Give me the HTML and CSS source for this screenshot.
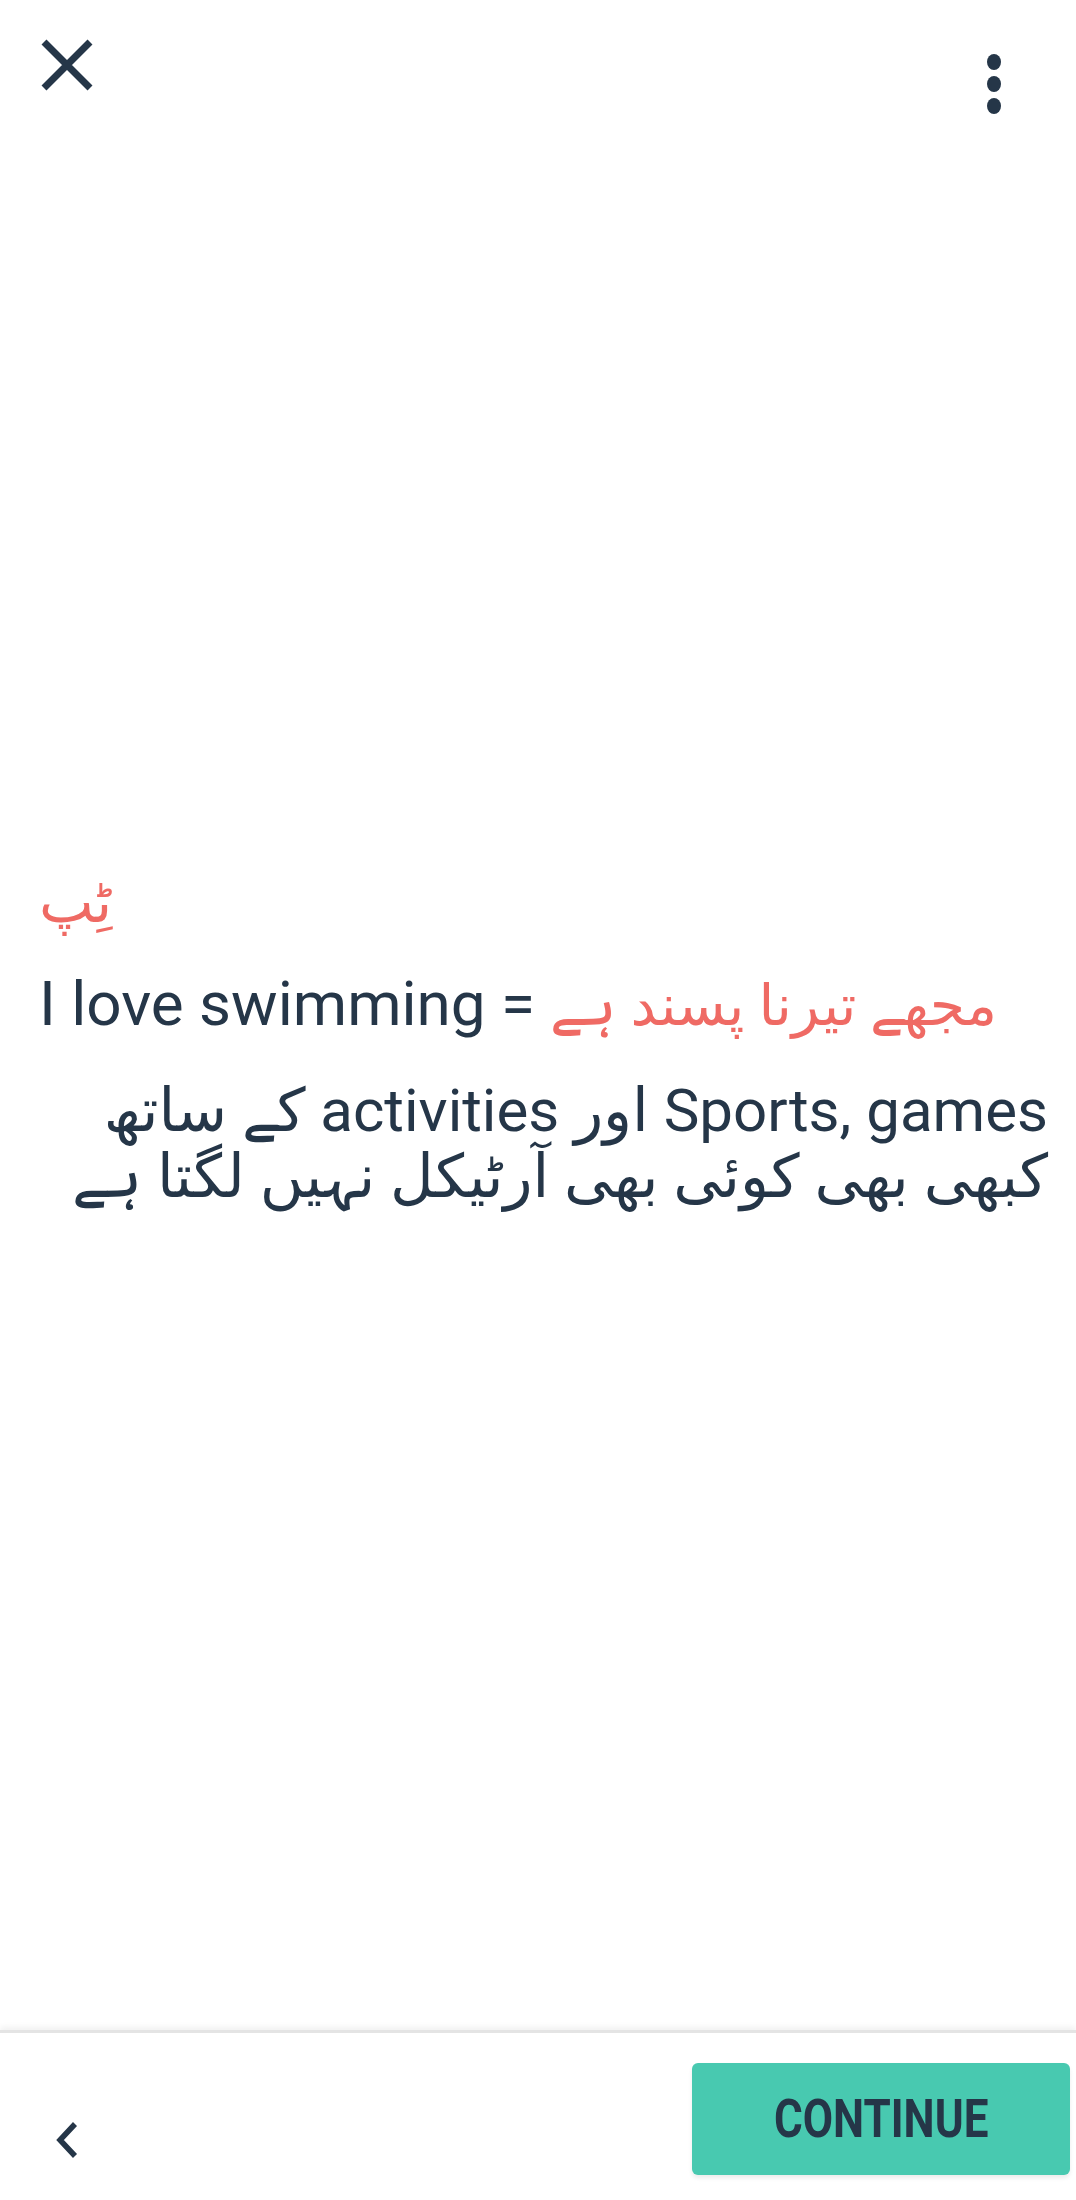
FILE: index.html
```html
<!DOCTYPE html>
<html lang="ur">
<head>
<meta charset="utf-8">
<title>Tip</title>
<link rel="stylesheet" href="styles.css">
</head>
<body>
<div class="screen">
  <header class="topbar">
    <button class="icon-btn close" aria-label="Close">
      <svg width="54" height="54" viewBox="0 0 54 54"><path d="M4 4 L50 50 M50 4 L4 50" stroke="#253648" stroke-width="7" fill="none"/></svg>
    </button>
    <button class="icon-btn more" aria-label="More">
      <svg width="20" height="64" viewBox="0 0 20 64"><ellipse cx="10" cy="9" rx="7" ry="8" fill="#253648"/><ellipse cx="10" cy="31" rx="7" ry="8" fill="#253648"/><ellipse cx="10" cy="53" rx="7" ry="8" fill="#253648"/></svg>
    </button>
  </header>
  <main class="content">
    <h2 class="tip-title" dir="rtl">ٹِپ</h2>
    <p class="example">I love swimming = <span class="accent">مجھے تیرنا پسند ہے</span></p>
    <p class="note" dir="rtl">Sports, games اور activities کے ساتھ<br>کبھی بھی کوئی بھی آرٹیکل نہیں لگتا ہے</p>
  </main>
  <footer class="bottombar">
    <button class="icon-btn back" aria-label="Back">
      <svg width="26" height="38" viewBox="0 0 26 38"><path d="M21 3 L6 19 L21 35" stroke="#253648" stroke-width="5.5" fill="none"/></svg>
    </button>
    <button class="continue"><span class="continue-label">CONTINUE</span></button>
  </footer>
</div>
</body>
</html>
```
FILE: styles.css
```css
* { box-sizing: border-box; }
html, body { margin: 0; padding: 0; background: #ffffff; }
body { font-family: Roboto, "DejaVu Sans", sans-serif; color: #253648; }

.screen {
  width: 1076px;
  min-height: 2200px;
  display: flex;
  flex-direction: column;
}

.icon-btn {
  border: 0;
  background: transparent;
  padding: 0;
  display: flex;
  align-items: center;
  justify-content: center;
}

.topbar {
  height: 140px;
  display: flex;
  justify-content: space-between;
  align-items: flex-start;
  padding: 38px 72px 0 40px;
}
.more { margin-top: 15px; }

.content {
  flex: 1;
  padding: 730px 28px 0 39px;
}

.tip-title {
  margin: 0;
  font-size: 58px;
  font-weight: normal;
  color: #ef6a64;
  text-align: right;
  direction: rtl;
  width: max-content;
  line-height: 64px;
}

.example {
  margin: 34px 0 0 0;
  font-size: 62px;
  line-height: 72px;
  white-space: nowrap;
}
.accent { color: #ef6a64; font-size: 57px; }

.note {
  margin: 36px 0 0 0;
  font-size: 60px;
  line-height: 66px;
  text-align: right;
}

.bottombar {
  height: 170px;
  border-top: 3px solid #e4e4e4;
  box-shadow: 0 -3px 6px rgba(0, 0, 0, 0.06);
  display: flex;
  align-items: center;
  justify-content: space-between;
  padding: 0 6px 0 54px;
}
.back { margin-top: 46px; }

.continue {
  width: 378px;
  height: 112px;
  background: #48c9b0;
  border: 0;
  border-radius: 6px;
  display: flex;
  align-items: center;
  justify-content: center;
  margin-top: 4px;
  box-shadow: 0 3px 4px rgba(0, 0, 0, 0.08);
}
.continue-label {
  display: inline-block;
  font-family: Roboto, "Liberation Sans", sans-serif;
  font-weight: bold;
  font-size: 53px;
  color: #253648;
  transform: scaleX(0.83);
  letter-spacing: 0;
}
```
